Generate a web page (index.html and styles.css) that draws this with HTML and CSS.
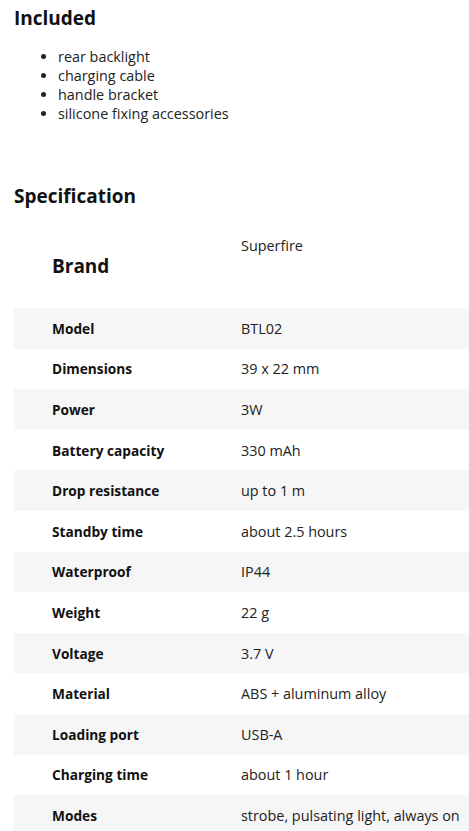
FILE: index.html
```html
<!DOCTYPE html>
<html>
<head>
<meta charset="utf-8">
<link rel="stylesheet" href="styles.css">
</head>
<body>
<div class="page">
  <h2 class="heading">Included</h2>
  <ul class="included">
    <li>rear backlight</li>
    <li>charging cable</li>
    <li>handle bracket</li>
    <li>silicone fixing accessories</li>
  </ul>

  <h2 class="heading spec-heading">Specification</h2>
  <table class="spec">
    <thead>
      <tr>
        <th class="label"><h3 class="brand">Brand</h3></th>
        <td class="value top">Superfire</td>
      </tr>
    </thead>
    <tbody>
      <tr><th class="label">Model</th><td class="value">BTL02</td></tr>
      <tr><th class="label">Dimensions</th><td class="value">39 x 22 mm</td></tr>
      <tr><th class="label">Power</th><td class="value">3W</td></tr>
      <tr><th class="label">Battery capacity</th><td class="value">330 mAh</td></tr>
      <tr><th class="label">Drop resistance</th><td class="value">up to 1 m</td></tr>
      <tr><th class="label">Standby time</th><td class="value">about 2.5 hours</td></tr>
      <tr><th class="label">Waterproof</th><td class="value">IP44</td></tr>
      <tr><th class="label">Weight</th><td class="value">22 g</td></tr>
      <tr><th class="label">Voltage</th><td class="value">3.7 V</td></tr>
      <tr><th class="label">Material</th><td class="value">ABS + aluminum alloy</td></tr>
      <tr><th class="label">Loading port</th><td class="value">USB-A</td></tr>
      <tr><th class="label">Charging time</th><td class="value">about 1 hour</td></tr>
      <tr><th class="label">Modes</th><td class="value">strobe, pulsating light, always on</td></tr>
    </tbody>
  </table>
</div>
</body>
</html>
```

FILE: styles.css
```css
html, body {
  margin: 0;
  padding: 0;
  background: #ffffff;
  overflow-x: hidden;
}
body {
  font-family: "Open Sans", "DejaVu Sans", sans-serif;
  color: #222222;
  font-size: 14.4px;
}
.page {
  padding: 6px 0 0 14px;
}
.heading {
  margin: 0;
  font-size: 19px;
  font-weight: 700;
  line-height: 24px;
  color: #111111;
}
.included {
  margin: 17px 0 0 0;
  padding-left: 44px;
  line-height: 19px;
  font-size: 14.4px;
  color: #222222;
}
.spec-heading {
  margin-top: 61px;
}
.spec {
  margin-top: 18px;
  width: 455px;
  border-collapse: collapse;
  border-spacing: 0;
}
.spec tbody tr:nth-child(odd) {
  background: #f6f6f6;
}
.spec tbody tr {
  height: 40.6px;
}
.label {
  text-align: left;
  font-weight: 700;
  font-size: 13.7px;
  color: #111111;
  padding: 0 0 0 38px;
  width: 189px;
  vertical-align: middle;
}
.value {
  padding: 0;
  vertical-align: middle;
  white-space: nowrap;
}
.value.top {
  vertical-align: top;
  padding-top: 10px;
}
.brand {
  margin: 0;
  font-size: 19px;
  font-weight: 700;
  line-height: 24px;
  padding: 28px 0 30px 0;
}
```
